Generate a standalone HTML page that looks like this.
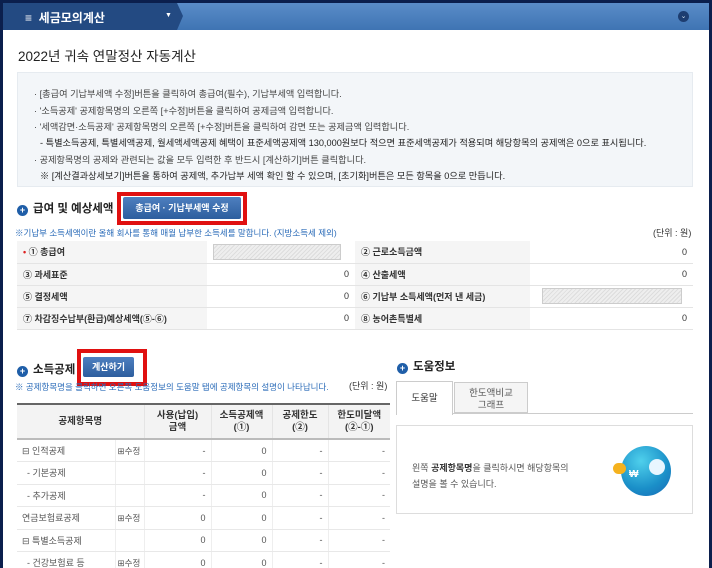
<!DOCTYPE html>
<html><head><meta charset="utf-8"><style>
*{margin:0;padding:0;box-sizing:border-box}
body{width:712px;height:568px;overflow:hidden;background:#0b1f4d;font-family:"Liberation Sans","Noto Sans CJK KR",sans-serif;color:#333;position:relative}
.page{position:absolute;left:3px;top:3px;width:706px;height:565px;background:#fff;overflow:hidden}
.a{position:absolute;white-space:nowrap}
.hdr{position:absolute;left:0;top:0;width:706px;height:27px;background:linear-gradient(#5a8cc8,#3f74b3)}
.tab{position:absolute;left:0;top:0;width:180px;height:27px;background:#234a82;clip-path:polygon(0 0,174px 0,180px 13px,174px 27px,0 27px)}
.info{position:absolute;left:14px;top:69px;width:676px;height:115px;background:#f3f6f9;border:1px solid #e6ebf0}
.info div{position:absolute;left:16px;font-size:9.2px;color:#444;white-space:nowrap}
.h2{font-size:11.5px;font-weight:bold;color:#222}
.dot{display:inline-block;width:11px;height:11px;border-radius:50%;background:#1f5ea8;color:#fff;font-size:9px;line-height:11px;text-align:center;vertical-align:-1px;margin-right:5px}
.btn{position:absolute;background:linear-gradient(#4e7fbf,#2d5e9e);color:#fff;font-size:9px;font-weight:bold;text-align:center;border-radius:2px}
.red{position:absolute;border:4px solid #e01010}
table{border-collapse:collapse;position:absolute;font-size:9px;table-layout:fixed}
.t1 td{height:22px;border-bottom:1px solid #e4e4e4;padding:0 6px;white-space:nowrap}
.t1 .l{background:#f5f5f5;font-weight:bold}
.hatch{display:inline-block;width:128px;height:16px;border:1px solid #ccc;background:repeating-linear-gradient(135deg,#eee 0 2px,#ddd 2px 3px);vertical-align:middle}
.t2 td{height:22.5px;border-bottom:1px solid #e8e8e8;border-left:1px solid #eee;padding:0 5px;color:#555;white-space:nowrap;overflow:hidden}
.t2 td.e{padding:0 2px;font-size:8.5px}
.t2 th{background:#f3f3f3;font-size:9.5px;color:#333;height:35px;border-left:1px solid #e4e4e4;font-weight:bold;line-height:12px}
.r{text-align:right}
</style></head><body><div class="page">
<div class="hdr"></div><div class="tab"></div>
<div class="a" style="left:22px;top:6px;color:#fff;font-size:12px;font-weight:bold">≡ &nbsp;세금모의계산</div>
<div class="a" style="left:162px;top:9px;color:#fff;font-size:7px">▼</div>
<div class="a" style="left:675px;top:8px;width:11px;height:11px;border-radius:50%;background:#1d3d70;color:#cde;font-size:7px;text-align:center;line-height:11px">⌄</div>
<div class="a" style="left:15px;top:42px;font-size:13.5px;color:#222">2022년 귀속 연말정산 자동계산</div>
<div class="info">
<div style="top:13px">· [총급여 기납부세액 수정]버튼을 클릭하여 총급여(필수), 기납부세액 입력합니다.</div>
<div style="top:30px">· '소득공제' 공제항목명의 오른쪽 [+수정]버튼을 클릭하여 공제금액 입력합니다.</div>
<div style="top:46px">· '세액감면·소득공제' 공제항목명의 오른쪽 [+수정]버튼을 클릭하여 감면 또는 공제금액 입력합니다.</div>
<div style="top:62px;left:22px;color:#222">- 특별소득공제, 특별세액공제, 월세액세액공제 혜택이 표준세액공제액 130,000원보다 적으면 표준세액공제가 적용되며 해당항목의 공제액은 0으로 표시됩니다.</div>
<div style="top:79px">· 공제항목명의 공제와 관련되는 값을 모두 입력한 후 반드시 [계산하기]버튼 클릭합니다.</div>
<div style="top:95px;left:22px;color:#222">※ [계산결과상세보기]버튼을 통하여 공제액, 추가납부 세액 확인 할 수 있으며, [초기화]버튼은 모든 항목을 0으로 만듭니다.</div>
</div>
<div class="a h2" style="left:14px;top:197px"><span class="dot">+</span>급여 및 예상세액</div>
<div class="red" style="left:114px;top:189px;width:130px;height:33px"></div>
<div class="btn" style="left:120px;top:194px;width:118px;height:22px;line-height:22px">총급여 · 기납부세액 수정</div>
<div class="a" style="left:12px;top:224px;font-size:8.5px;color:#2a6bb8">※기납부 소득세액이란 올해 회사를 통해 매월 납부한 소득세를 말합니다. (지방소득세 제외)</div>
<div class="a" style="left:650px;top:223px;font-size:9px">(단위 : 원)</div>
<table class="t1" style="left:14px;top:238px;width:676px">
<tr><td class="l" style="width:190px"><span style="color:#d22">•</span> ① 총급여</td><td style="width:148px;padding-left:6px"><span class="hatch"></span></td><td class="l" style="width:175px">② 근로소득금액</td><td class="r">0</td></tr>
<tr><td class="l">③ 과세표준</td><td class="r">0</td><td class="l">④ 산출세액</td><td class="r">0</td></tr>
<tr><td class="l">⑤ 결정세액</td><td class="r">0</td><td class="l">⑥ 기납부 소득세액(먼저 낸 세금)</td><td style="padding-left:12px"><span class="hatch" style="width:140px"></span></td></tr>
<tr><td class="l">⑦ 차감징수납부(환급)예상세액(⑤-⑥)</td><td class="r">0</td><td class="l">⑧ 농어촌특별세</td><td class="r">0</td></tr>
</table>
<div class="a h2" style="left:14px;top:358px"><span class="dot">+</span>소득공제</div>
<div class="red" style="left:74px;top:346px;width:70px;height:37px"></div>
<div class="btn" style="left:80px;top:354px;width:51px;height:20px;line-height:20px">계산하기</div>
<div class="a" style="left:12px;top:378px;font-size:8.5px;color:#2a6bb8">※ 공제항목명을 클릭하면 오른쪽 도움정보의 도움말 탭에 공제항목의 설명이 나타납니다.</div>
<div class="a" style="left:346px;top:376px;font-size:9px">(단위 : 원)</div>
<table class="t2" style="left:14px;top:400px;width:373px;border-top:2px solid #666">
<colgroup><col style="width:98px"><col style="width:29px"><col style="width:67px"><col style="width:61px"><col style="width:56px"><col></colgroup>
<tr style="border-bottom:2px solid #bbb"><th colspan="2" style="border-left:none">공제항목명</th><th>사용(납입)<br>금액</th><th>소득공제액<br>(①)</th><th>공제한도<br>(②)</th><th>한도미달액<br>(②-①)</th></tr>
<tr><td style="border-left:none">⊟ 인적공제</td><td class="e">⊞수정</td><td class="r">-</td><td class="r">0</td><td class="r">-</td><td class="r">-</td></tr>
<tr><td style="border-left:none">&nbsp;&nbsp;- 기본공제</td><td></td><td class="r">-</td><td class="r">0</td><td class="r">-</td><td class="r">-</td></tr>
<tr><td style="border-left:none">&nbsp;&nbsp;- 추가공제</td><td></td><td class="r">-</td><td class="r">0</td><td class="r">-</td><td class="r">-</td></tr>
<tr><td style="border-left:none">연금보험료공제</td><td class="e">⊞수정</td><td class="r">0</td><td class="r">0</td><td class="r">-</td><td class="r">-</td></tr>
<tr><td style="border-left:none">⊟ 특별소득공제</td><td></td><td class="r">0</td><td class="r">0</td><td class="r">-</td><td class="r">-</td></tr>
<tr><td style="border-left:none">&nbsp;&nbsp;- 건강보험료 등</td><td class="e">⊞수정</td><td class="r">0</td><td class="r">0</td><td class="r">-</td><td class="r">-</td></tr>
</table>
<div class="a h2" style="left:394px;top:355px"><span class="dot">+</span>도움정보</div>
<div class="a" style="left:393px;top:410px;width:297px;height:1px;background:#ccc"></div>
<div class="a" style="left:393px;top:378px;width:57px;height:34px;background:#fff;border:1px solid #ccc;border-bottom:none;font-size:9.5px;text-align:center;padding-top:8px">도움말</div>
<div class="a" style="left:451px;top:379px;width:74px;height:31px;background:#f5f5f5;border:1px solid #ccc;font-size:9.5px;text-align:center;padding-top:5px;line-height:12px;color:#555">한도액비교<br>그래프</div>
<div class="a" style="left:393px;top:422px;width:297px;height:89px;border:1px solid #ddd"></div>
<div class="a" style="left:409px;top:457px;font-size:9px;color:#555;line-height:16px">왼쪽 <b style="color:#333">공제항목명</b>을 클릭하시면 해당항목의<br>설명을 볼 수 있습니다.</div>
<div class="a" style="left:618px;top:443px;width:50px;height:50px;border-radius:50%;background:radial-gradient(circle at 40% 30%,#4fd0ec,#1a8fc8 60%,#1867b5)"></div>
<div class="a" style="left:610px;top:460px;width:13px;height:11px;border-radius:6px;background:#f5b21e"></div>
<div class="a" style="left:626px;top:466px;color:#fff;font-size:10px;font-weight:bold">₩</div>
<div class="a" style="left:646px;top:456px;width:16px;height:16px;border-radius:50%;background:#e8f6ff"></div>
</div></body></html>
